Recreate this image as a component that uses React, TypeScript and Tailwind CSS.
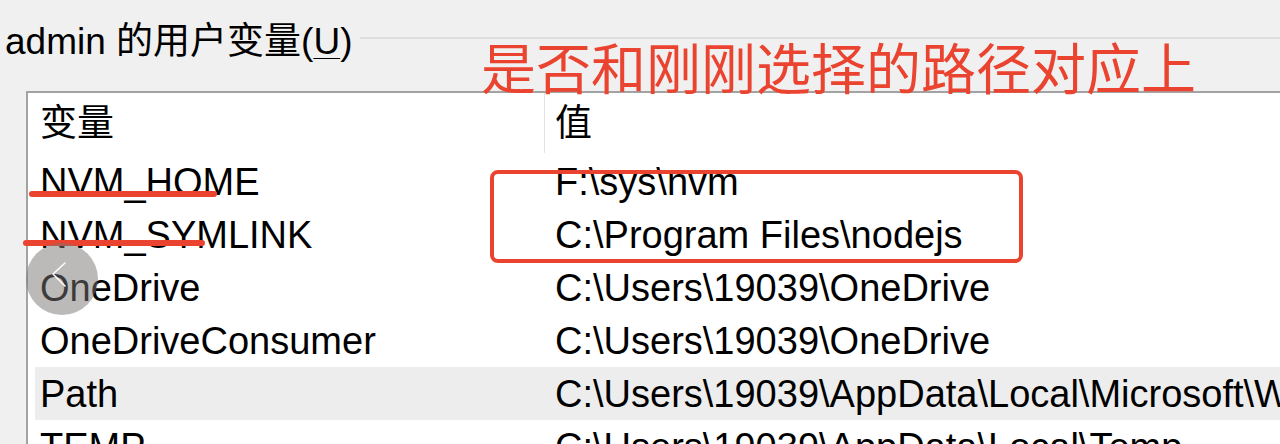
const rows: Array<{ name: string; value: string; selected?: boolean }> = [
  { name: 'NVM_HOME', value: 'F:\\sys\\nvm' },
  { name: 'NVM_SYMLINK', value: 'C:\\Program Files\\nodejs' },
  { name: 'OneDrive', value: 'C:\\Users\\19039\\OneDrive' },
  { name: 'OneDriveConsumer', value: 'C:\\Users\\19039\\OneDrive' },
  { name: 'Path', value: 'C:\\Users\\19039\\AppData\\Local\\Microsoft\\WindowsApps;', selected: true },
  { name: 'TEMP', value: 'C:\\Users\\19039\\AppData\\Local\\Temp' },
];

function VariableRow({ name, value, selected }: { name: string; value: string; selected?: boolean }) {
  return (
    <div className={`ml-[7px] flex h-[53px] items-center whitespace-nowrap ${selected ? 'bg-[#ededed]' : ''}`}>
      <div className="w-[520px] shrink-0 pl-[5px]">{name}</div>
      <div>{value}</div>
    </div>
  );
}

export default function App() {
  return (
    <div className="relative h-[444px] w-[1280px] overflow-hidden bg-[#f0f0f0] font-['Liberation_Sans','Noto_Sans_CJK_SC',sans-serif] text-black">
      {/* group box title */}
      <div className="flex items-start pl-[5px] pt-[20px]">
        <span className="whitespace-nowrap text-[37px] leading-[44px]">
          admin 的用户变量(<span className="underline decoration-1 underline-offset-4">U</span>)
        </span>
        <div className="ml-[8px] mt-[17px] h-[2px] flex-1 bg-[#dedede]" />
      </div>

      {/* list view */}
      <div className="ml-[26px] mt-[27px] border-l-2 border-t-2 border-[#a3a3a3] bg-white text-[38px] leading-none">
        <div className="ml-[7px] flex h-[62px] items-start">
          <div className="flex h-[60px] w-[510px] shrink-0 items-center border-r border-[#e3e3e3] pl-[5px] text-[37px]">
            变量
          </div>
          <div className="flex h-[60px] items-center pl-[10px] text-[37px]">值</div>
        </div>
        {rows.map((row) => (
          <VariableRow key={row.name} {...row} />
        ))}
      </div>

      {/* annotations */}
      <div className="absolute left-[481px] top-[38px] whitespace-nowrap font-['Noto_Sans_CJK_SC',sans-serif] text-[55px] leading-[55px] text-[#ea4330]">
        是否和刚刚选择的路径对应上
      </div>
      <div className="absolute left-[490px] top-[170px] h-[93px] w-[533px] rounded-[8px] border-[4px] border-[#ea4330]" />
      <div className="absolute left-[29px] top-[191px] h-[6px] w-[188px] rounded-full bg-[#ea4330]" />
      <div className="absolute left-[23px] top-[240px] h-[6px] w-[182px] rounded-full bg-[#ea4330]" />

      {/* carousel back button */}
      <div className="absolute left-[26px] top-[243px] flex h-[72px] w-[72px] items-center justify-center rounded-full bg-[#7a7573]/50">
        <svg width="20" height="30" viewBox="0 0 20 30" fill="none" className="-ml-[4px] -mt-[6px]">
          <path d="M15 2 L3 13 L15 25" stroke="white" strokeWidth="1.5" strokeLinecap="round" strokeLinejoin="round" />
        </svg>
      </div>
    </div>
  );
}
